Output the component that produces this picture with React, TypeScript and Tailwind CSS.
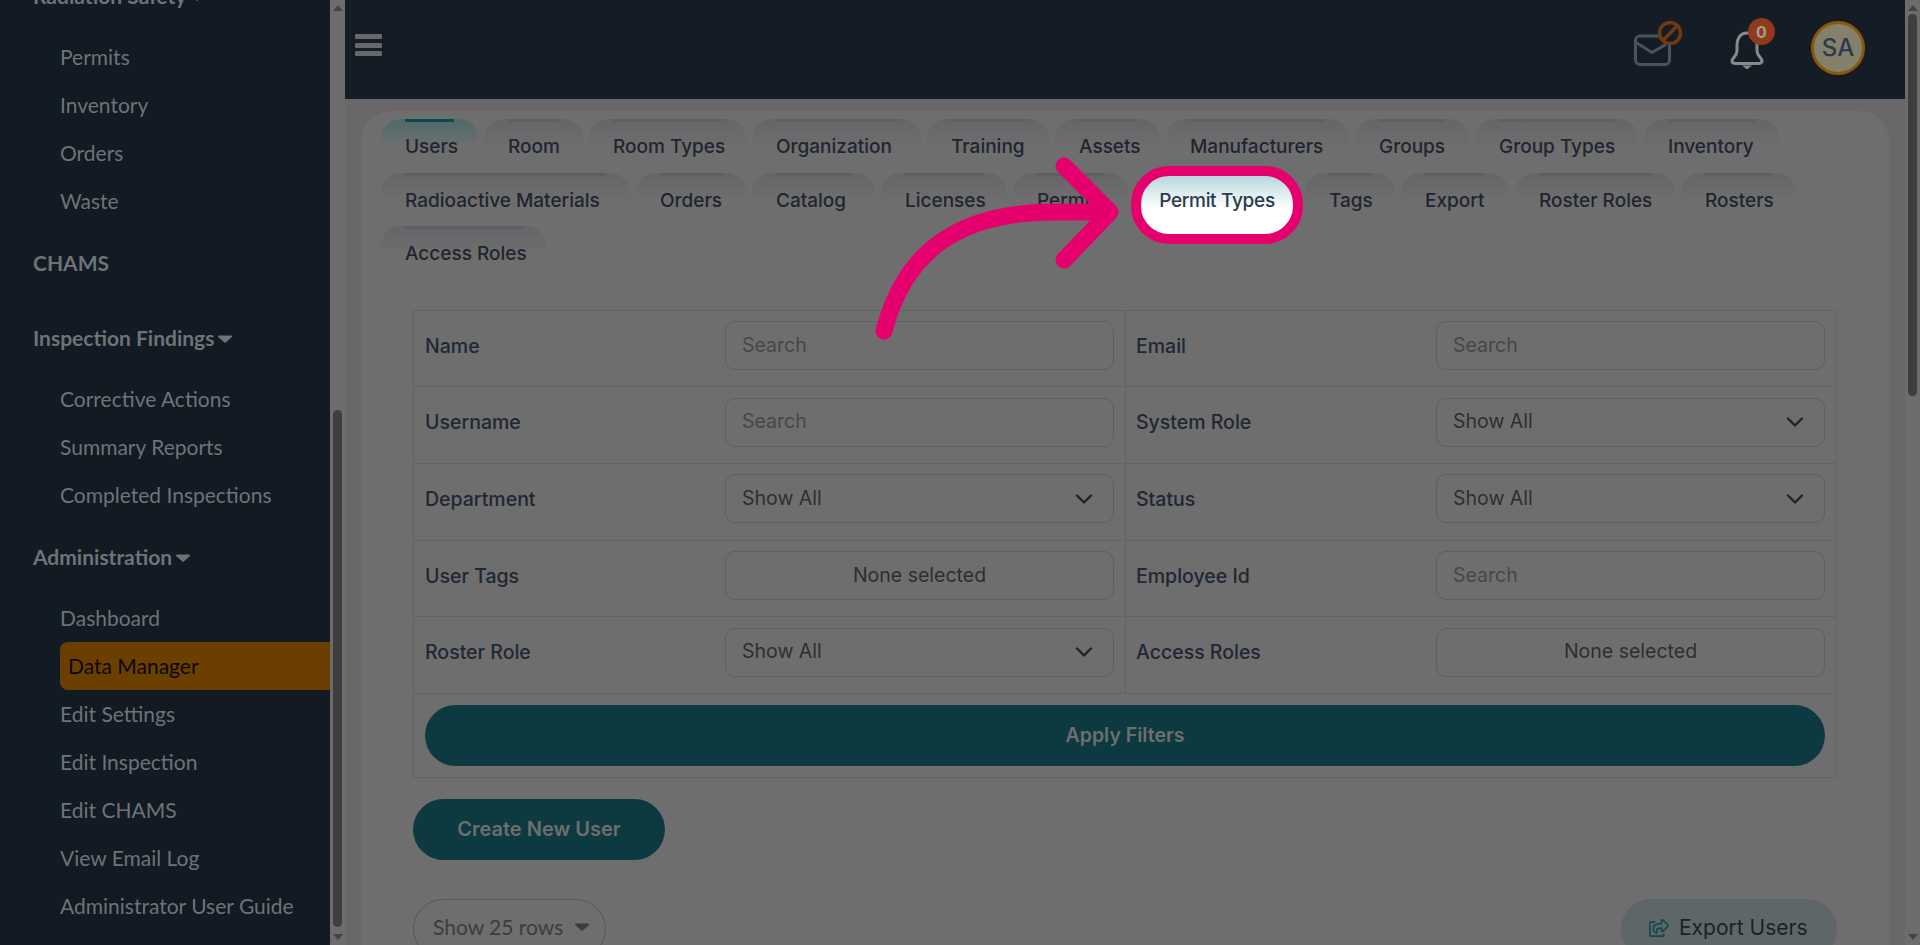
import { FaRegShareSquare } from 'react-icons/fa';
import { ChevronDown } from 'lucide-react';

const TABS = [
  { label: 'Users', w: 'w-[97px]' },
  { label: 'Room', w: 'w-[99px]' },
  { label: 'Room Types', w: 'w-[157px]' },
  { label: 'Organization', w: 'w-[169px]' },
  { label: 'Training', w: 'w-[122px]' },
  { label: 'Assets', w: 'w-[105px]' },
  { label: 'Manufacturers', w: 'w-[183px]' },
  { label: 'Groups', w: 'w-[114px]' },
  { label: 'Group Types', w: 'w-[163px]' },
  { label: 'Inventory', w: 'w-[135px]' },
  { label: 'Radioactive Materials', w: 'w-[249px]' },
  { label: 'Orders', w: 'w-[110px]' },
  { label: 'Catalog', w: 'w-[123px]' },
  { label: 'Licenses', w: 'w-[126px]' },
  { label: 'Permits', w: 'w-[115px]' },
  { label: 'Permit Types', w: 'w-[165px]' },
  { label: 'Tags', w: 'w-[90px]' },
  { label: 'Export', w: 'w-[108px]' },
  { label: 'Roster Roles', w: 'w-[160px]' },
  { label: 'Rosters', w: 'w-[115px]' },
  { label: 'Access Roles', w: 'w-[165px]' },
];

const NAV = [
  { title: 'Radiation Safety', caret: true, items: ['Permits', 'Inventory', 'Orders', 'Waste'] },
  { title: 'CHAMS', caret: false, items: [] },
  { title: 'Inspection Findings', caret: true, items: ['Corrective Actions', 'Summary Reports', 'Completed Inspections'] },
  { title: 'Administration', caret: true, items: ['Dashboard', 'Data Manager', 'Edit Settings', 'Edit Inspection', 'Edit CHAMS', 'View Email Log', 'Administrator User Guide'] },
];

const FILTERS = [
  [{ label: 'Name', kind: 'search' }, { label: 'Email', kind: 'search' }],
  [{ label: 'Username', kind: 'search' }, { label: 'System Role', kind: 'select' }],
  [{ label: 'Department', kind: 'select' }, { label: 'Status', kind: 'select' }],
  [{ label: 'User Tags', kind: 'multi' }, { label: 'Employee Id', kind: 'search' }],
  [{ label: 'Roster Role', kind: 'select' }, { label: 'Access Roles', kind: 'multi' }],
];

const geo = "font-['Inter',sans-serif]";

function Caret({ className }: { className: string }) {
  return (
    <svg width="14" height="8" viewBox="0 0 14 8" className={className}>
      <path d="M1 0.5h12a1 1 0 0 1 .7 1.7L7.7 7.4a1 1 0 0 1-1.4 0L.3 2.2A1 1 0 0 1 1 .5z" fill="currentColor" />
    </svg>
  );
}

function Scrollbar({ thumbTop, thumbHeight }: { thumbTop: string; thumbHeight: string }) {
  return (
    <div className="w-[15px] shrink-0 flex flex-col items-center bg-[#6c6c6c]">
      <div className="mt-[5px] w-0 h-0 border-x-[5px] border-x-transparent border-b-[6px] border-b-[#444]" />
      <div className={`w-[9px] rounded-full bg-[#3e3e3e] ${thumbTop} ${thumbHeight}`} />
      <div className="mt-auto mb-[5px] w-0 h-0 border-x-[5px] border-x-transparent border-t-[6px] border-t-[#444]" />
    </div>
  );
}

function Sidebar() {
  return (
    <aside className="w-[330px] shrink-0 bg-[#121a23] overflow-hidden font-['Lato',sans-serif] text-[21px] text-[#6f7377]">
      <div className="-mt-[28px]">
        {NAV.map(group => (
          <div key={group.title} className="flex flex-col mb-[14px]">
            <div className="h-12 mb-[13px] pl-[33px] flex items-center gap-1 font-bold">
              {group.title}
              {group.caret && <Caret className="mt-0.5" />}
            </div>
            {group.items.map(item =>
              item === 'Data Manager' ? (
                <div key={item} className="h-12 ml-[60px] pl-2 flex items-center rounded-l-lg bg-[#6b3f00] text-[#0b0a08]">{item}</div>
              ) : (
                <div key={item} className="h-12 pl-[60px] flex items-center">{item}</div>
              )
            )}
          </div>
        ))}
      </div>
    </aside>
  );
}

function Header() {
  return (
    <header className="h-[99px] shrink-0 bg-[#141c26] flex items-start justify-between pl-[10px] pr-[40px]">
      <div className="mt-[34px] flex flex-col gap-[3.5px] w-[27px]">
        <div className="h-[5px] rounded-[1px] bg-[#66686b]" />
        <div className="h-[5px] rounded-[1px] bg-[#66686b]" />
        <div className="h-[5px] rounded-[1px] bg-[#66686b]" />
      </div>
      <div className="flex items-start pt-[15px]">
        <svg width="70" height="60" viewBox="0 0 70 60" fill="none">
          <path d="M34 21H15a4.500 4.500 0 0 0-4.500 4.500V45a4.500 4.500 0 0 0 4.500 4.500h25a4.500 4.500 0 0 0 4.500-4.500V31" stroke="#4b525c" strokeWidth="3" strokeLinecap="round" />
          <path d="M11 27.500l16 10 13-7.500" stroke="#4b525c" strokeWidth="3" strokeLinecap="round" strokeLinejoin="round" />
          <circle cx="45" cy="18" r="10.500" stroke="#6f3a10" strokeWidth="3.500" />
          <path d="M38 25.500L52.500 10.500" stroke="#6f3a10" strokeWidth="3.500" />
        </svg>
        <div className="relative ml-[30px] w-[50px] h-[60px]">
          <svg width="50" height="60" viewBox="0 0 50 60" fill="none">
            <path d="M22 18C15 18 12 24 12 30V36C12 41 7 43 7 46C7 48 9 48.500 11 48.500H33C35 48.500 37 48 37 46C37 43 32 41 32 36V30C32 24 29 18 22 18Z" stroke="#8a8a8a" strokeWidth="3" />
            <path d="M17 50.500H27L22 54.500Z" fill="#8a8a8a" />
          </svg>
          <div className={`absolute left-[23px] top-[3px] w-[27px] h-[27px] rounded-full bg-[#8f3a1a] flex items-center justify-center text-[16px] font-bold text-[#a89c96] ${geo}`}>0</div>
        </div>
        <div className="ml-[36px] mt-[6px] w-[54px] h-[54px] rounded-full border-[3.5px] border-[#8a5806] bg-[#85806b] flex items-center justify-center text-[24px] font-medium text-[#2b3a4e]">SA</div>
      </div>
    </header>
  );
}

function Tab({ label, w }: { label: string; w: string }) {
  const active = label === 'Users';
  const spotlight = label === 'Permit Types';
  return (
    <div className={`relative ${w} h-[53.5px] mr-[6px] rounded-t-[20px] bg-linear-to-b to-[#6e6e6e] to-50% ${active ? 'from-[#4c6a68]' : 'from-[#656468]'}`}>
      <div className={`mx-6 h-[3px] ${active ? 'bg-[#0d4a4e]' : 'bg-[#5f5e63]'}`} />
      <div className={`pl-6 pt-[11px] text-[19px] font-[550] text-[#1e2530] whitespace-nowrap ${spotlight ? 'invisible' : ''}`}>{label}</div>
      {spotlight && (
        <div className="absolute z-10 -left-[3px] -top-[7px] w-[172px] h-[78px] pb-[6px] rounded-[38px] border-[10px] border-[#e6006e] overflow-hidden bg-linear-to-b from-[#b7d7dc] to-white to-55% flex items-center justify-center text-[19px] font-[550] text-[#2b3b50] whitespace-nowrap tracking-[-0.3px]">
          {label}
        </div>
      )}
    </div>
  );
}

function Control({ kind }: { kind: string }) {
  const base = 'w-[389px] h-[49px] shrink-0 rounded-[10px] border border-[#5f5f62] flex items-center text-[19.5px]';
  if (kind === 'search') return <div className={`${base} px-[16px] text-[#45474b]`}>Search</div>;
  if (kind === 'multi') return <div className={`${base} justify-center text-[#2c2e32]`}>None selected</div>;
  return (
    <div className={`${base} pl-[16px] pr-[15px] justify-between text-[#2c2e32]`}>
      Show All
      <ChevronDown size={28} strokeWidth={2} className="text-[#1e2126]" />
    </div>
  );
}

function FilterTable() {
  return (
    <div className="border border-[#646466] text-[19.5px] font-medium text-[#1f2733]">
      {FILTERS.map(row => (
        <div key={row[0].label} className="grid grid-cols-[712px_1fr] h-[76.700px] border-b border-[#646466]">
          {row.map((cell, i) => (
            <div key={cell.label} className={`flex items-center justify-between pb-[4px] ${i === 0 ? 'pl-[11px] pr-[11px] border-r border-[#646466]' : 'pl-[10px] pr-[11px]'}`}>
              <span>{cell.label}</span>
              <div className="font-normal mb-[2px]"><Control kind={cell.kind} /></div>
            </div>
          ))}
        </div>
      ))}
      <div className="h-[83px] px-[11px] pt-[11px]">
        <div className="h-[61px] rounded-full bg-[#0c3a40] flex items-center justify-center font-semibold text-[#6e6e6e]">Apply Filters</div>
      </div>
    </div>
  );
}

export default function App() {
  return (
    <div className={`relative h-[945px] w-[1920px] overflow-hidden flex ${geo}`}>
      <Sidebar />
      <Scrollbar thumbTop="mt-[399px]" thumbHeight="h-[517px]" />
      <main className="flex-1 min-w-0 flex flex-col bg-[#68686b]">
        <Header />
        <div className="flex-1 overflow-hidden px-4 pt-3">
          <div className="h-[900px] rounded-t-[30px] bg-[#6e6e6e] pt-2">
            <div className="flex flex-wrap pl-5 pr-5">
              {TABS.map(t => <Tab key={t.label} label={t.label} w={t.w} />)}
            </div>
            <div className="mx-[52px] mt-[30px]">
              <FilterTable />
              <div className="mt-[21px] w-[252px] h-[61px] rounded-full bg-[#0c3a40] flex items-center justify-center text-[20px] font-semibold text-[#6e6e6e]">Create New User</div>
              <div className="mt-[39px] flex items-start justify-between">
                <div className="w-[193px] h-[60px] pb-[5px] rounded-full border border-[#575757] flex items-center pl-[19px] gap-[12px] font-['Lato',sans-serif] text-[21px] text-[#3c3c3c]">
                  Show 25 rows
                  <Caret className="mt-[2px] text-[#3c3c3c]" />
                </div>
                <div className="w-[216px] h-[60px] pb-[2px] rounded-full bg-[#5f6667] flex items-center pl-[28px] gap-[10px] text-[21px] font-normal text-[#1a212b]">
                  <FaRegShareSquare size={20} className="text-[#0e4a4f]" />
                  Export Users
                </div>
              </div>
            </div>
          </div>
        </div>
      </main>
      <Scrollbar thumbTop="mt-[3px]" thumbHeight="h-[382px]" />
      <svg className="absolute left-0 top-0 pointer-events-none z-20" width="1920" height="945" fill="none">
        <path d="M884 331C905 250 960 212 1055 212L1108 212" stroke="#e6006e" strokeWidth="17" strokeLinecap="round" />
        <path d="M1064 166L1110 212L1064 260" stroke="#e6006e" strokeWidth="17" strokeLinecap="round" strokeLinejoin="round" />
      </svg>
    </div>
  );
}
